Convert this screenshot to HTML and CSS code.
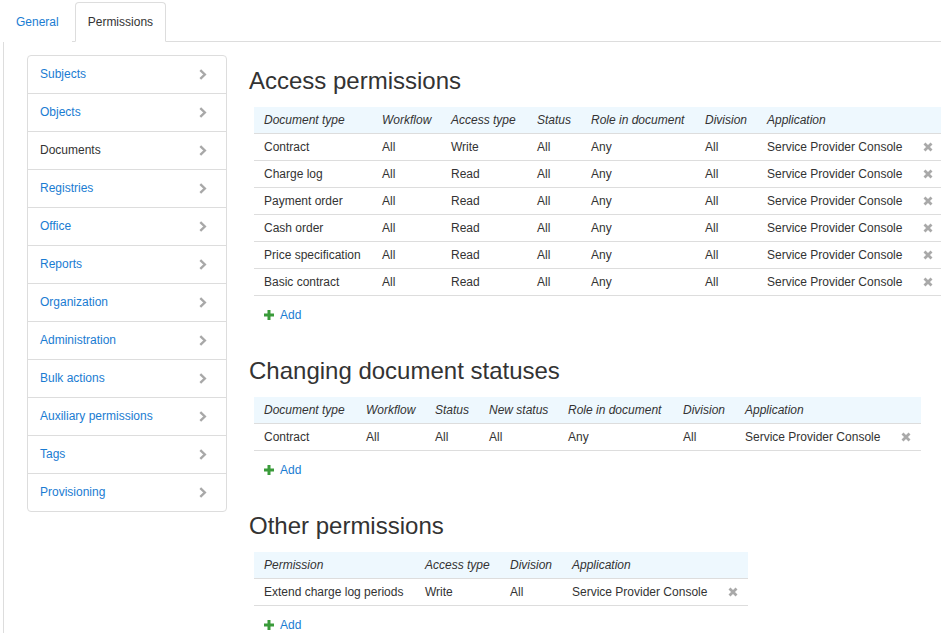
FILE: index.html
```html
<!DOCTYPE html>
<html>
<head>
<meta charset="utf-8">
<link rel="stylesheet" href="styles.css">
</head>
<body>
<div class="page">
  <div class="tabs">
    <a class="tab">General</a>
    <a class="tab active">Permissions</a>
  </div>
  <div class="panel">
    <ul class="sidenav">
      <li class="nav-item"><span class="nav-link">Subjects</span><svg class="chev" viewBox="0 0 8 11"><path d="M1.3 1.2 L5.8 5.5 L1.3 9.8"/></svg></li>
      <li class="nav-item"><span class="nav-link">Objects</span><svg class="chev" viewBox="0 0 8 11"><path d="M1.3 1.2 L5.8 5.5 L1.3 9.8"/></svg></li>
      <li class="nav-item current"><span class="nav-link">Documents</span><svg class="chev" viewBox="0 0 8 11"><path d="M1.3 1.2 L5.8 5.5 L1.3 9.8"/></svg></li>
      <li class="nav-item"><span class="nav-link">Registries</span><svg class="chev" viewBox="0 0 8 11"><path d="M1.3 1.2 L5.8 5.5 L1.3 9.8"/></svg></li>
      <li class="nav-item"><span class="nav-link">Office</span><svg class="chev" viewBox="0 0 8 11"><path d="M1.3 1.2 L5.8 5.5 L1.3 9.8"/></svg></li>
      <li class="nav-item"><span class="nav-link">Reports</span><svg class="chev" viewBox="0 0 8 11"><path d="M1.3 1.2 L5.8 5.5 L1.3 9.8"/></svg></li>
      <li class="nav-item"><span class="nav-link">Organization</span><svg class="chev" viewBox="0 0 8 11"><path d="M1.3 1.2 L5.8 5.5 L1.3 9.8"/></svg></li>
      <li class="nav-item"><span class="nav-link">Administration</span><svg class="chev" viewBox="0 0 8 11"><path d="M1.3 1.2 L5.8 5.5 L1.3 9.8"/></svg></li>
      <li class="nav-item"><span class="nav-link">Bulk actions</span><svg class="chev" viewBox="0 0 8 11"><path d="M1.3 1.2 L5.8 5.5 L1.3 9.8"/></svg></li>
      <li class="nav-item"><span class="nav-link">Auxiliary permissions</span><svg class="chev" viewBox="0 0 8 11"><path d="M1.3 1.2 L5.8 5.5 L1.3 9.8"/></svg></li>
      <li class="nav-item"><span class="nav-link">Tags</span><svg class="chev" viewBox="0 0 8 11"><path d="M1.3 1.2 L5.8 5.5 L1.3 9.8"/></svg></li>
      <li class="nav-item"><span class="nav-link">Provisioning</span><svg class="chev" viewBox="0 0 8 11"><path d="M1.3 1.2 L5.8 5.5 L1.3 9.8"/></svg></li>
    </ul>

    <div class="main">
      <section class="section">
        <h2 class="title">Access permissions</h2>
        <table class="grid t-access">
          <colgroup><col class="c1"><col class="c2"><col class="c3"><col class="c4"><col class="c5"><col class="c6"><col class="c-app"><col class="c-del"></colgroup>
          <thead><tr><th>Document type</th><th>Workflow</th><th>Access type</th><th>Status</th><th>Role in document</th><th>Division</th><th>Application</th><th></th></tr></thead>
          <tbody>
            <tr><td>Contract</td><td>All</td><td>Write</td><td>All</td><td>Any</td><td>All</td><td>Service Provider Console</td><td class="del"><svg class="x" viewBox="0 0 10 10"><path d="M1.5 1.5 L8.5 8.5 M8.5 1.5 L1.5 8.5"/></svg></td></tr>
            <tr><td>Charge log</td><td>All</td><td>Read</td><td>All</td><td>Any</td><td>All</td><td>Service Provider Console</td><td class="del"><svg class="x" viewBox="0 0 10 10"><path d="M1.5 1.5 L8.5 8.5 M8.5 1.5 L1.5 8.5"/></svg></td></tr>
            <tr><td>Payment order</td><td>All</td><td>Read</td><td>All</td><td>Any</td><td>All</td><td>Service Provider Console</td><td class="del"><svg class="x" viewBox="0 0 10 10"><path d="M1.5 1.5 L8.5 8.5 M8.5 1.5 L1.5 8.5"/></svg></td></tr>
            <tr><td>Cash order</td><td>All</td><td>Read</td><td>All</td><td>Any</td><td>All</td><td>Service Provider Console</td><td class="del"><svg class="x" viewBox="0 0 10 10"><path d="M1.5 1.5 L8.5 8.5 M8.5 1.5 L1.5 8.5"/></svg></td></tr>
            <tr><td>Price specification</td><td>All</td><td>Read</td><td>All</td><td>Any</td><td>All</td><td>Service Provider Console</td><td class="del"><svg class="x" viewBox="0 0 10 10"><path d="M1.5 1.5 L8.5 8.5 M8.5 1.5 L1.5 8.5"/></svg></td></tr>
            <tr><td>Basic contract</td><td>All</td><td>Read</td><td>All</td><td>Any</td><td>All</td><td>Service Provider Console</td><td class="del"><svg class="x" viewBox="0 0 10 10"><path d="M1.5 1.5 L8.5 8.5 M8.5 1.5 L1.5 8.5"/></svg></td></tr>
          </tbody>
        </table>
        <a class="add"><svg class="plus" viewBox="0 0 10 10"><path d="M5 0 V10 M0 5 H10"/></svg>Add</a>
      </section>

      <section class="section">
        <h2 class="title">Changing document statuses</h2>
        <table class="grid t-status">
          <colgroup><col class="c1"><col class="c2"><col class="c3"><col class="c4"><col class="c5"><col class="c6"><col class="c-app"><col class="c-del"></colgroup>
          <thead><tr><th>Document type</th><th>Workflow</th><th>Status</th><th>New status</th><th>Role in document</th><th>Division</th><th>Application</th><th></th></tr></thead>
          <tbody>
            <tr><td>Contract</td><td>All</td><td>All</td><td>All</td><td>Any</td><td>All</td><td>Service Provider Console</td><td class="del"><svg class="x" viewBox="0 0 10 10"><path d="M1.5 1.5 L8.5 8.5 M8.5 1.5 L1.5 8.5"/></svg></td></tr>
          </tbody>
        </table>
        <a class="add"><svg class="plus" viewBox="0 0 10 10"><path d="M5 0 V10 M0 5 H10"/></svg>Add</a>
      </section>

      <section class="section">
        <h2 class="title">Other permissions</h2>
        <table class="grid t-other">
          <colgroup><col class="c1"><col class="c2"><col class="c3"><col class="c-app"><col class="c-del"></colgroup>
          <thead><tr><th>Permission</th><th>Access type</th><th>Division</th><th>Application</th><th></th></tr></thead>
          <tbody>
            <tr><td>Extend charge log periods</td><td>Write</td><td>All</td><td>Service Provider Console</td><td class="del"><svg class="x" viewBox="0 0 10 10"><path d="M1.5 1.5 L8.5 8.5 M8.5 1.5 L1.5 8.5"/></svg></td></tr>
          </tbody>
        </table>
        <a class="add"><svg class="plus" viewBox="0 0 10 10"><path d="M5 0 V10 M0 5 H10"/></svg>Add</a>
      </section>
    </div>
  </div>
</div>
</body>
</html>
```

FILE: styles.css
```css
html, body {
  margin: 0;
  padding: 0;
  background: #fff;
  overflow: hidden;
}
body {
  font-family: "Liberation Sans", Arial, sans-serif;
  font-size: 12px;
  color: #333;
  width: 941px;
  height: 633px;
}
.page {
  margin-left: 3px;
}
.tabs {
  display: flex;
  padding-top: 2px;
  border-bottom: 1px solid #ddd;
  height: 39px;
}
.tab {
  display: block;
  height: 38px;
  line-height: 38px;
  padding: 0 12px;
  border: 1px solid transparent;
  border-radius: 4px 4px 0 0;
  margin-right: 3px;
  color: #1a7cd2;
  background: #fff;
}
.tab.active {
  color: #333;
  border-color: #ddd;
  border-bottom-color: #fff;
}
.panel {
  display: flex;
  align-items: flex-start;
  gap: 22px;
  border-left: 1px solid #ddd;
  padding: 13px 0 0 23px;
  height: 600px;
}
.sidenav {
  list-style: none;
  margin: 0;
  padding: 0;
  width: 198px;
  flex: none;
  border: 1px solid #ddd;
  border-radius: 4px;
}
.nav-item {
  display: flex;
  align-items: center;
  justify-content: space-between;
  height: 35px;
  padding: 0 19px 2px 12px;
  border-bottom: 1px solid #ddd;
}
.nav-item:last-child {
  border-bottom: none;
}
.nav-link {
  color: #1a7cd2;
}
.nav-item.current .nav-link {
  color: #333;
}
.chev {
  width: 8px;
  height: 11px;
  margin-top: 2px;
  fill: none;
  stroke: #a8a8a8;
  stroke-width: 2.4;
}
.main {
  flex: 1;
  min-width: 0;
  padding-top: 13px;
}
.section {
  margin-bottom: 34px;
}
.title {
  margin: 0 0 13px 0;
  font-size: 24px;
  line-height: 26px;
  font-weight: normal;
  color: #333;
}
.grid {
  margin-left: 5px;
  border-collapse: collapse;
  table-layout: fixed;
}
.grid th,
.grid td {
  height: 26px;
  padding: 0 0 0 10px;
  text-align: left;
  vertical-align: middle;
  white-space: nowrap;
  border-bottom: 1px solid #ddd;
  overflow: hidden;
}
.grid th {
  font-style: italic;
  font-weight: normal;
  background: #eef8fe;
}
.grid td.del {
  padding-left: 11px;
}
.x {
  display: block;
  width: 10px;
  height: 10px;
  fill: none;
  stroke: #a9a9a9;
  stroke-width: 2.8;
}
.t-access { width: 689px; }
.t-access .c1 { width: 118px; }
.t-access .c2 { width: 69px; }
.t-access .c3 { width: 86px; }
.t-access .c4 { width: 54px; }
.t-access .c5 { width: 114px; }
.t-access .c6 { width: 62px; }
.t-status { width: 667px; }
.t-status .c1 { width: 102px; }
.t-status .c2 { width: 69px; }
.t-status .c3 { width: 54px; }
.t-status .c4 { width: 79px; }
.t-status .c5 { width: 115px; }
.t-status .c6 { width: 62px; }
.t-other { width: 494px; }
.t-other .c1 { width: 161px; }
.t-other .c2 { width: 85px; }
.t-other .c3 { width: 62px; }
.c-app { width: 155px; }
.c-del { width: 31px; }
.add {
  display: flex;
  width: fit-content;
  align-items: center;
  margin: 10px 0 0 15px;
  height: 18px;
  line-height: 18px;
  color: #1a7cd2;
}
.plus {
  width: 10px;
  height: 10px;
  margin-right: 6px;
  fill: none;
  stroke: #3a9b3a;
  stroke-width: 3;
}
```
